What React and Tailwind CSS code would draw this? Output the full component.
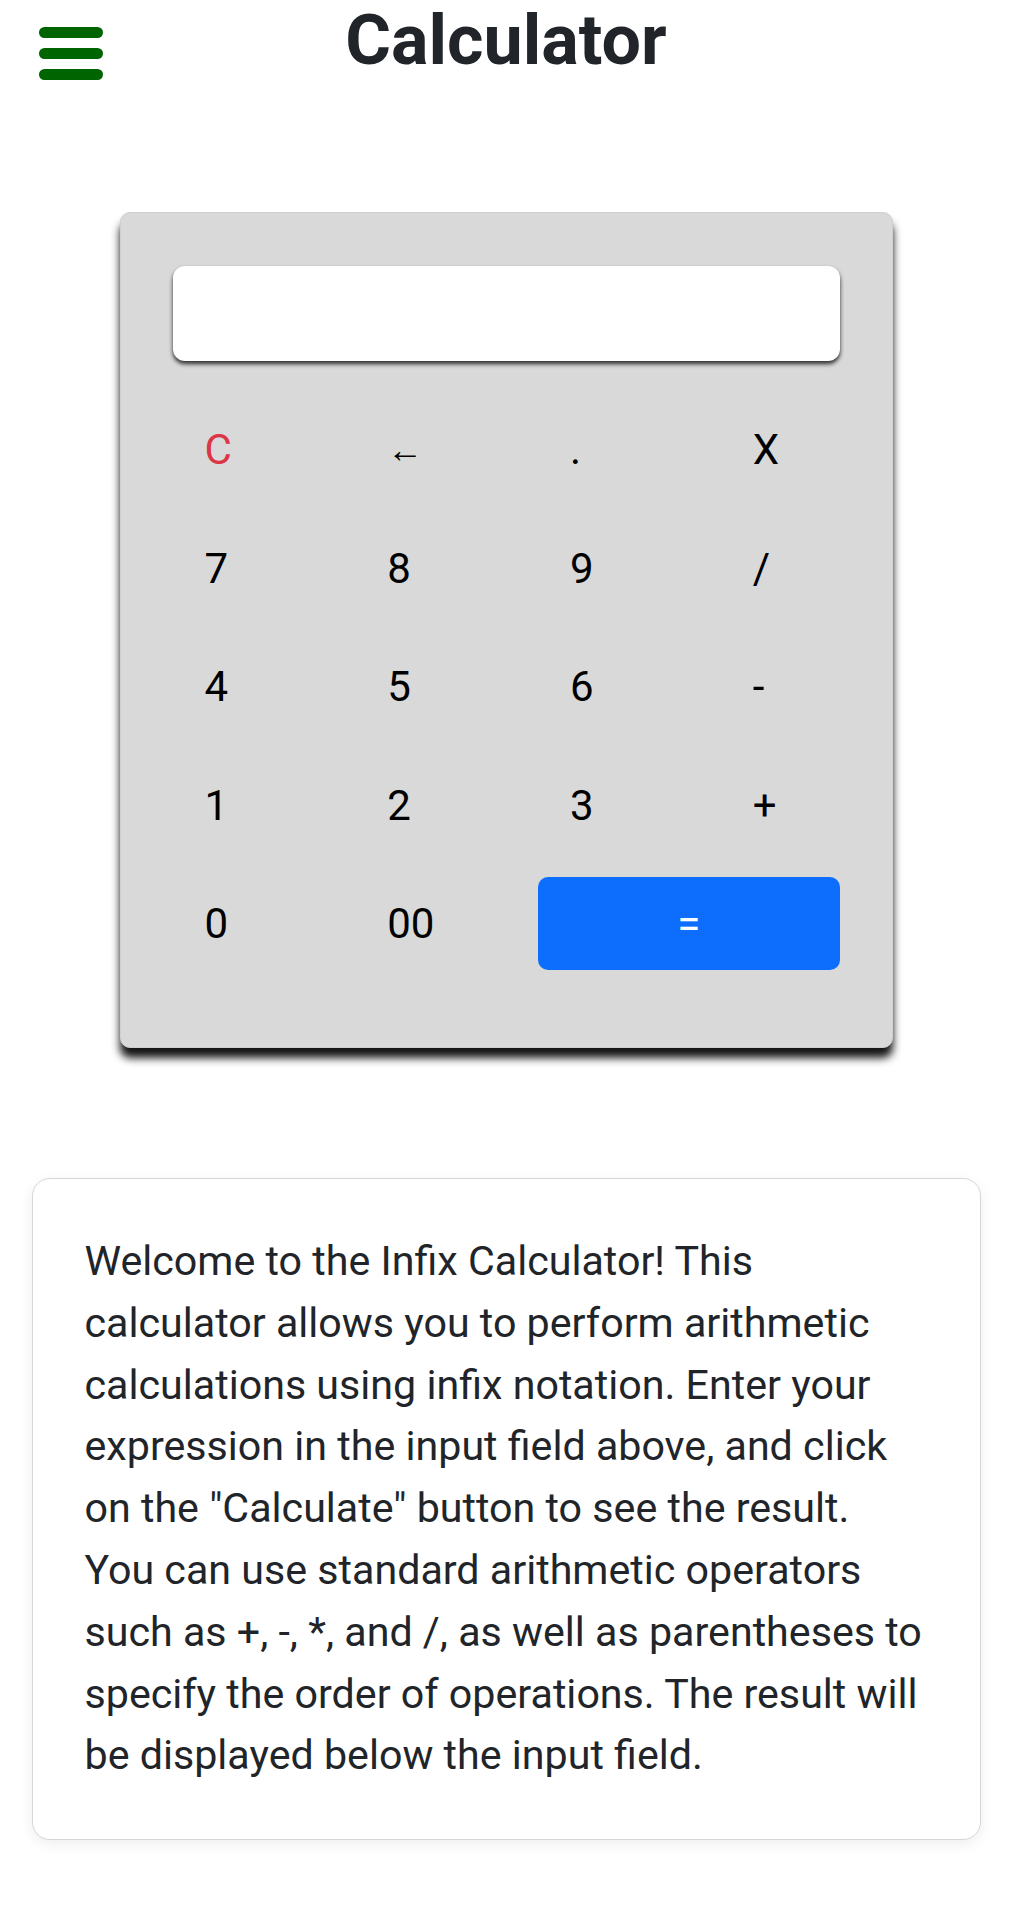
import React, { useState } from 'react';

const keys = [
    { label: 'C', color: 'text-[#dc3545]' },
    { label: '←', color: 'text-black', size: 'text-[36px]' },
    { label: '.', color: 'text-black' },
    { label: 'X', color: 'text-black' },
    { label: '7', color: 'text-black' },
    { label: '8', color: 'text-black' },
    { label: '9', color: 'text-black' },
    { label: '/', color: 'text-black' },
    { label: '4', color: 'text-black' },
    { label: '5', color: 'text-black' },
    { label: '6', color: 'text-black' },
    { label: '-', color: 'text-black' },
    { label: '1', color: 'text-black' },
    { label: '2', color: 'text-black' },
    { label: '3', color: 'text-black' },
    { label: '+', color: 'text-black' },
    { label: '0', color: 'text-black' },
    { label: '00', color: 'text-black' },
];

const App = () => {
    const [expression, setExpression] = useState('');

    const handleKey = (label) => {
        if (label === 'C') return setExpression('');
        if (label === '←') return setExpression(expression.slice(0, -1));
        setExpression(expression + (label === 'X' ? '*' : label));
    };

    return (
        <div className="min-h-screen bg-white font-['Roboto','Liberation_Sans',sans-serif] text-[#212529] pb-[79px]">
            {/* header */}
            <div className="grid grid-cols-[1fr_auto_1fr]">
                <div className="pl-[39px] pt-[27px]">
                    <button type="button" className="flex flex-col gap-[10px]">
                        <span className="block w-[64px] h-[11px] rounded-full bg-[#006400]"></span>
                        <span className="block w-[64px] h-[11px] rounded-full bg-[#006400]"></span>
                        <span className="block w-[64px] h-[11px] rounded-full bg-[#006400]"></span>
                    </button>
                </div>
                <h1 className="text-[70px] font-bold leading-[1.2] -mt-[2px]">Calculator</h1>
                <div></div>
            </div>

            {/* calculator */}
            <div className="mt-[130px] mx-auto w-[773px] bg-[#d9d9d9] border border-[#cfcfcf] rounded-[10px] px-[52px] pt-[53px] pb-[77px] shadow-[0_10px_9px_rgba(0,0,0,0.92)]">
                <input
                    type="text"
                    value={expression}
                    onChange={(e) => setExpression(e.target.value)}
                    className="block w-full h-[95px] bg-white rounded-[12px] px-6 text-[41px] outline-none shadow-[0_3px_4px_rgba(0,0,0,0.8)]"
                />
                <div className="mt-[42px] grid grid-cols-4 gap-x-[64px] gap-y-[25.5px]">
                    {keys.map((k) => (
                        <button
                            key={k.label}
                            type="button"
                            onClick={() => handleKey(k.label)}
                            className={`h-[93px] flex items-center pl-[32px] ${k.size || 'text-[42px]'} ${k.color}`}
                        >
                            {k.label}
                        </button>
                    ))}
                    <button
                        type="button"
                        className="col-span-2 h-[93px] rounded-[10px] bg-[#0d6efd] text-white text-[42px] flex items-center justify-center"
                    >
                        =
                    </button>
                </div>
            </div>

            {/* about */}
            <div className="mt-[130px] mx-auto w-[949px] bg-white border border-[#d6d6d6] rounded-[18px] pl-[52px] pr-[54px] py-[52px] shadow-[0_4px_14px_rgba(0,0,0,0.07)]">
                <p className="text-[41.2px] leading-[1.5]">
                    Welcome to the Infix Calculator! This calculator allows you to perform arithmetic calculations using infix notation. Enter your expression in the input field above, and click on the "Calculate" button to see the result. You can use standard arithmetic operators such as +, -, *, and /, as well as parentheses to specify the order of operations. The result will be displayed below the input field.
                </p>
            </div>
        </div>
    );
};

export default App;
